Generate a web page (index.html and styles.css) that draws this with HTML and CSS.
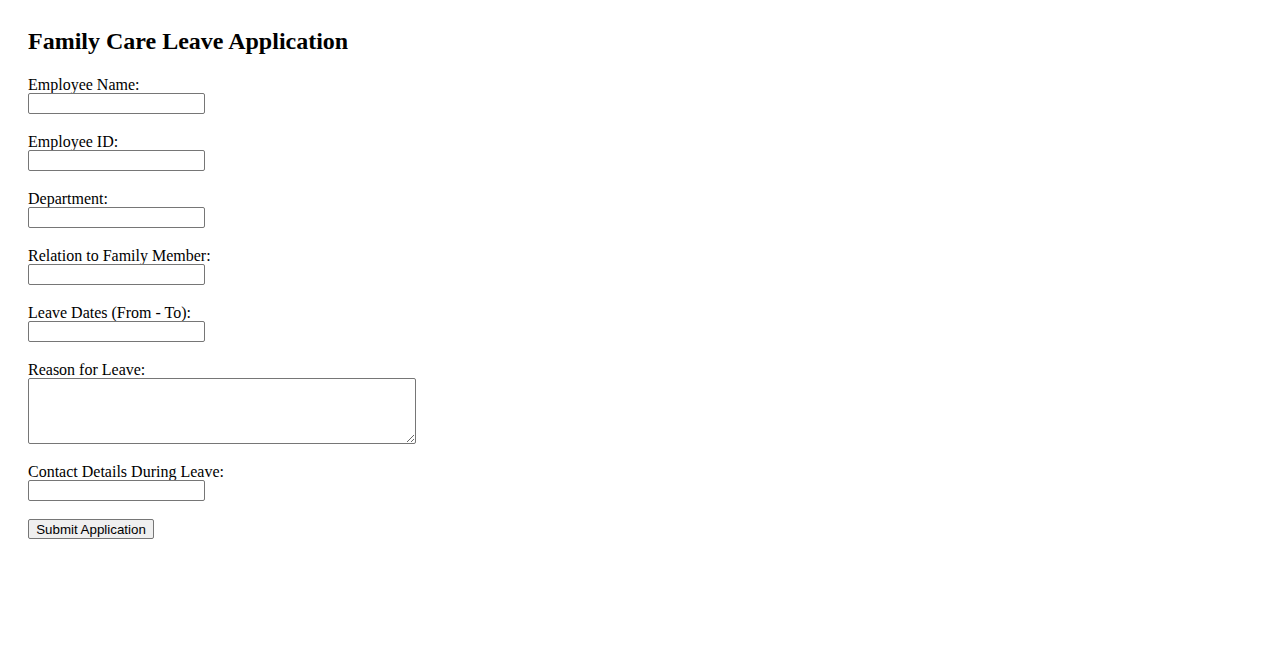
FILE: index.html
```html
<!DOCTYPE html>
<html lang="en">
<head>
<meta charset="utf-8">
<title>Family Care Leave Application</title>
<link rel="stylesheet" href="styles.css">
</head>
<body>
<main class="page">
  <h2 class="title">Family Care Leave Application</h2>
  <form class="leave-form">
    <div class="field">
      <label class="field-label" for="name">Employee Name:</label>
      <input class="text-input" type="text" id="name">
    </div>
    <div class="field">
      <label class="field-label" for="empid">Employee ID:</label>
      <input class="text-input" type="text" id="empid">
    </div>
    <div class="field">
      <label class="field-label" for="dept">Department:</label>
      <input class="text-input" type="text" id="dept">
    </div>
    <div class="field">
      <label class="field-label" for="relation">Relation to Family Member:</label>
      <input class="text-input" type="text" id="relation">
    </div>
    <div class="field">
      <label class="field-label" for="dates">Leave Dates (From - To):</label>
      <input class="text-input" type="text" id="dates">
    </div>
    <div class="field">
      <label class="field-label" for="reason">Reason for Leave:</label>
      <textarea class="text-area" id="reason"></textarea>
    </div>
    <div class="field">
      <label class="field-label" for="contact">Contact Details During Leave:</label>
      <input class="text-input" type="text" id="contact">
    </div>
    <button class="submit-btn" type="submit">Submit Application</button>
  </form>
</main>
</body>
</html>
```

FILE: styles.css
```css
html, body {
  margin: 0;
  padding: 0;
  background: #ffffff;
}

body {
  font-family: "Liberation Serif", "Times New Roman", serif;
  font-size: 16px;
  color: #000000;
}

.page {
  padding: 28px;
}

.title {
  margin: 0 0 20px 0;
  font-size: 24px;
  line-height: 27px;
  font-weight: bold;
}

.leave-form {
  display: flex;
  flex-direction: column;
  align-items: flex-start;
}

.field {
  display: flex;
  flex-direction: column;
  align-items: flex-start;
  margin-bottom: 18px;
}

.field-label {
  display: block;
  box-sizing: border-box;
  padding-top: 1px;
  line-height: 17px;
  height: 18px;
}

.text-input {
  box-sizing: border-box;
  display: block;
  width: 177px;
  height: 21px;
  margin: 0;
  padding: 1px 2px;
  border: 1px solid #767676;
  border-radius: 2px;
  background: #ffffff;
  font-family: "Liberation Sans", Arial, sans-serif;
  font-size: 13.33px;
}

.text-area {
  box-sizing: border-box;
  display: block;
  width: 388px;
  height: 66px;
  margin: 0;
  padding: 2px;
  border: 1px solid #767676;
  border-radius: 2px;
  background: #ffffff;
  font-family: "Liberation Mono", monospace;
  font-size: 13.33px;
}

.submit-btn {
  box-sizing: border-box;
  width: 126px;
  height: 20px;
  margin: 0;
  padding: 1px 6px;
  border: 1px solid #767676;
  border-radius: 2px;
  background: #efefef;
  color: #000000;
  font-family: "Liberation Sans", Arial, sans-serif;
  font-size: 13.33px;
  line-height: 15px;
  white-space: nowrap;
}
```
